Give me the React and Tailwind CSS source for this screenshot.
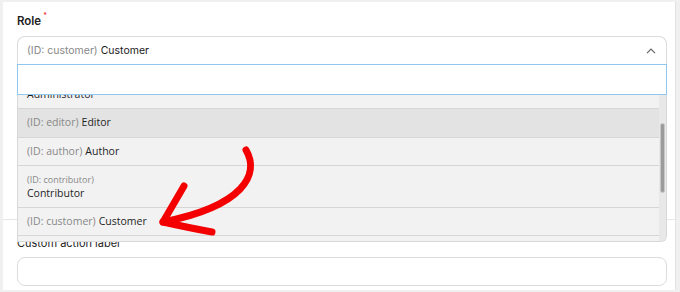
import React from "react";

const options = [
  { id: "administrator", name: "Administrator", stacked: true },
  { id: "editor", name: "Editor", active: true, h: "h-[29px]" },
  { id: "author", name: "Author", h: "h-[28px]" },
  { id: "contributor", name: "Contributor", stacked: true },
  { id: "customer", name: "Customer", h: "h-[28px]" },
];

function Option({ o }) {
  if (o.stacked) {
    return (
      <div className="h-[42px] border-b border-[#d6d6d6] pl-[9px] pt-[8px]">
        <div className="text-[9px] leading-[12px] text-[#888]">(ID: {o.id})</div>
        <div className="text-[10.5px] leading-[15px] text-[#1f1f1f]">{o.name}</div>
      </div>
    );
  }
  return (
    <div
      className={`${o.h} border-b border-[#d6d6d6] pl-[9px] flex items-center text-[10.5px] ${
        o.active ? "bg-[#e3e3e3]" : ""
      }`}
    >
      <span className="text-[#888]">(ID: {o.id})</span>
      <span className="ml-[3px] text-[#1f1f1f]">{o.name}</span>
    </div>
  );
}

export default function App() {
  return (
    <div className="w-[680px] h-[292px] bg-[#f0f0f0] pt-[2px] pl-[3px] pr-[4px] pb-[2px] overflow-hidden" style={{ fontFamily: "'Open Sans', 'Liberation Sans', sans-serif" }}>
      <div className="relative h-full bg-white border-r border-[#e2e2e2] flex flex-col">
        <div className="h-[218px] border-b border-[#e6e6e6] px-[14px] pt-[11px] shrink-0">
          <div className="flex text-[11.5px] leading-[16px] font-semibold text-[#1e1e1e]" style={{ fontFamily: "Inter, sans-serif" }}>
            Role<span className="text-[#e33] text-[7px] leading-[8px] ml-[2px] -mt-[1px]">*</span>
          </div>
          <div className="relative mt-[7px] w-[650px]">
            <div className="h-[28px] border border-b-0 border-[#dcdcdc] rounded-t-[8px] flex items-center pl-[9px] pr-[10px] text-[10.5px]" style={{ fontFamily: "Inter, sans-serif" }}>
              <span className="text-[#888]">(ID: customer)</span>
              <span className="ml-[3px] text-[#1a1a1a]">Customer</span>
              <svg className="ml-auto" width="10" height="6" viewBox="0 0 10 6" fill="none">
                <path d="M1 5.2L5 1.2L9 5.2" stroke="#666" strokeWidth="1.2" />
              </svg>
            </div>
            <div className="absolute left-0 right-0 top-full z-10">
              <div className="h-[31px] bg-white border-[1.5px] border-[#8fc7ef]" />
              <div className="relative h-[147px] bg-[#f2f2f2] border border-t-0 border-[#d8d8d8] rounded-br-[6px] overflow-hidden" style={{ fontFamily: "'Open Sans', sans-serif" }}>
                <div className="mr-[6px] -mt-[28px]">
                  {options.map((o) => (
                    <Option key={o.id} o={o} />
                  ))}
                </div>
                <div className="absolute right-0 top-0 bottom-0 w-[7px] bg-[#e8e8e8]">
                  <div className="absolute left-[1px] right-[1px] top-[28px] h-[70px] rounded-full bg-[#9b9b9b] border border-[#c8c8c8]" />
                </div>
              </div>
            </div>
          </div>
        </div>
        <div className="px-[14px] pt-[15px]">
          <div className="text-[11px] leading-[16px] text-[#1e1e1e]" style={{ fontFamily: "Inter, sans-serif" }}>Custom action label</div>
          <div className="mt-[6px] w-[650px] h-[29px] border border-[#dcdcdc] rounded-[8px]" />
        </div>
        <svg className="absolute inset-0 z-20 pointer-events-none" width="676" height="290" viewBox="3 2 676 290">
          <path d="M246 150 C 260 174, 244 206, 163 222" stroke="#f40000" strokeWidth="7" fill="none" strokeLinecap="round" />
          <path d="M184 186 L 163 222 Q 190 228, 212 232" stroke="#f40000" strokeWidth="7" fill="none" strokeLinecap="round" strokeLinejoin="round" />
        </svg>
      </div>
    </div>
  );
}
